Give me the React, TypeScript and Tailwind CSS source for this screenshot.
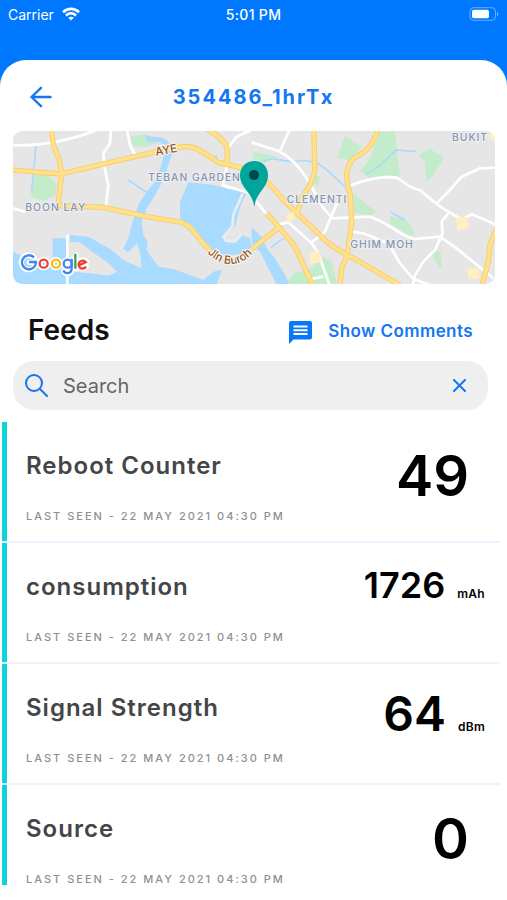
import React from "react";

type Feed = {
  name: string;
  value: string;
  unit?: string;
  size: string;
};

const feeds: Feed[] = [
  { name: "Reboot Counter", value: "49", size: "text-[56px]" },
  { name: "consumption", value: "1726", unit: "mAh", size: "text-[36px]" },
  { name: "Signal Strength", value: "64", unit: "dBm", size: "text-[48px]" },
  { name: "Source", value: "0", size: "text-[56px]" },
];

const lastSeen = "LAST SEEN - 22 MAY 2021 04:30 PM";

function StatusBar() {
  return (
    <div className="grid h-7 grid-cols-3 items-center px-2 text-[14px] text-white">
      <div className="flex items-center gap-2">
        <span>Carrier</span>
        <svg width="18" height="14" viewBox="0 0 18 14" aria-hidden="true">
          <g fill="none" stroke="white" strokeWidth="2.6">
            <path d="M1 5.2C5.6.7 12.4.7 17 5.2" />
            <path d="M4 8.5c3-2.8 7-2.8 10 0" />
          </g>
          <path d="M6.2 10.8c1.700-1.500 3.900-1.500 5.600 0L9 13.600z" fill="white" />
        </svg>
      </div>
      <span className="text-center font-medium tracking-wide">5:01 PM</span>
      <svg className="justify-self-end" width="30" height="14" viewBox="0 0 30 14" aria-hidden="true">
        <rect x="1" y=".7" width="25.5" height="12.6" rx="3.5" fill="none" stroke="white" strokeOpacity=".4" />
        <rect x="3" y="2.7" width="17" height="8.6" rx="2" fill="white" />
        <path d="M28 4.800c1.800.8 1.800 3.600 0 4.400z" fill="white" fillOpacity=".5" />
      </svg>
    </div>
  );
}

const majorRoads = [
  "M20 134L182 147L330 112L500 73C550 62 575 62 600 76L655 112L730 130C790 150 815 185 850 225L980 350C1010 375 1045 392 1070 405L1200 480",
  "M154 10L160 60L178 105L185 147L175 235",
  "M175 242L310 247L440 275L545 292C575 305 585 325 600 345L650 398",
  "M615 10C655 30 680 50 683 80L680 120",
  "M755 372L840 305",
  "M800 265L840 310L885 365L940 485",
  "M942 10L944 140L930 180L905 220L890 270",
  "M1135 10C1120 60 1100 80 1060 100C1035 130 1036 160 1050 205L1055 290L1042 390L1025 430L1020 485",
  "M1490 310L1470 360L1465 410L1445 485",
];

const minorRoads = [
  "M30 60C120 65 200 50 290 15",
  "M333 10L330 55L310 85L313 125L325 180L318 242",
  "M380 10L390 60L408 95",
  "M680 125L668 180L750 205M668 180L690 190",
  "M680 75L710 35L765 10",
  "M755 52L835 78C870 95 895 120 920 160C955 215 960 250 1000 280L1110 275C1180 300 1200 335 1245 342L1320 335L1370 370L1480 460",
  "M840 78L855 45L870 10",
  "M1050 182C1130 150 1170 155 1190 158C1220 175 1230 192 1260 195C1295 225 1310 240 1345 260L1385 283L1415 268L1490 300",
  "M1310 235L1350 195L1385 155L1440 130L1490 128",
  "M1345 265L1325 290L1328 325L1305 375L1270 410L1245 450L1238 485",
  "M1055 320L1090 325L1165 355L1200 415L1240 462L1290 480",
  "M1010 235L975 320L935 352",
  "M835 298L865 292L935 355L955 385L990 485",
  "M935 462L970 455",
  "M768 228L800 268",
  "M30 248L75 260M202 330V485",
];

const districts = [
  { name: "BOON LAY", x: 76, y: 258 },
  { name: "TEBAN GARDEN", x: 445, y: 167 },
  { name: "CLEMENTI", x: 860, y: 233 },
  { name: "GHIM MOH", x: 1051, y: 368 },
  { name: "BUKIT", x: 1356, y: 47 },
];

function LocationMap() {
  return (
    <svg
      className="block w-full"
      viewBox="39 18 1446 459"
      role="img"
      aria-label="Map of the device location"
      fontFamily="Inter, sans-serif"
    >
      <defs>
        <path id="buroh" d="M622 384C660 420 710 435 756 386C770 372 780 360 790 350" />
        <clipPath id="frame">
          <rect x="39" y="18" width="1446" height="459" rx="28" />
        </clipPath>
      </defs>
      <g clipPath="url(#frame)">
        <path fill="#e6e6e6" d="M39 18H1485V477H39z" />
        <path
          fill="#c3eccb"
          d="M98 150H140L172 178L165 212L130 228L92 215zM392 35L430 28L490 45L440 66L400 62zM1035 32L1085 65L1050 105L1010 100zM1140 20H1185L1200 155L1160 150L1110 160L1080 140L1110 100zM1255 90L1290 72L1333 98L1300 150L1280 170L1275 110zM1060 205L1128 260L1110 272L1062 262zM1170 272L1225 290L1245 328L1225 330L1170 295zM1295 378L1322 378L1325 435L1300 400zM759 80L835 95L790 115L759 100zM940 150L960 155L955 182L938 175zM970 395L995 410L1010 477H860L880 445L935 430z"
        />
        <g fill="#a9daff">
          <path d="M565 172L640 180L740 205L722 240L705 305L670 335L675 345L700 350L725 330L750 340L755 365L735 388L680 390L650 385L600 335L575 300L540 280L540 230z" />
          <path d="M435 30C465 42 485 30 505 50L517 85L505 120L490 165L460 220L440 250L425 290L430 330L443 350L440 375L460 405L475 425L520 432L610 465L640 440L665 435L650 480H39V380L80 400L158 415V340H198V440H220L330 450L350 440L320 410L275 380L240 355L210 352V330L265 335L330 372L370 405L425 430L420 380L410 355L385 382L370 372L385 340L398 290L415 240L440 200L470 165L485 115L500 60L470 50L440 48z" />
          <path d="M755 308L785 335L800 370L825 400L850 440L870 480H830L800 420L780 380L755 355z" />
        </g>
        <g fill="none" stroke="#a9daff" strokeWidth="5">
          <path d="M108 60L95 200M385 165L440 202M500 130L470 190M648 90V115" />
          <path d="M790 110C820 90 850 115 890 108C960 100 980 135 1035 185M1100 145C1150 125 1160 95 1190 75L1250 80M812 368L850 340M1170 260L1215 285" />
        </g>
        <path fill="#e8e6e2" d="M210 352H240L275 380L330 420L350 440L325 452L210 435z" />
        <g fill="none" stroke="white" strokeWidth="8" strokeLinejoin="round">
          {minorRoads.map((d) => (
            <path key={d} d={d} />
          ))}
        </g>
        <path d="M728 205L700 270L697 305L670 335L678 347L705 350L725 328" fill="none" stroke="#ececec" strokeWidth="8" />
        <g fill="none" stroke="#f5cc6c" strokeWidth="16" strokeLinejoin="round">
          {majorRoads.map((d) => (
            <path key={d} d={d} />
          ))}
        </g>
        <g fill="none" stroke="#ffe18b" strokeWidth="11" strokeLinejoin="round">
          {majorRoads.map((d) => (
            <path key={d} d={d} />
          ))}
        </g>
        <g fill="#ffefc1">
          <path d="M1368 278L1400 275L1408 308L1372 318zM928 382L958 378L965 412L930 416zM1402 430L1435 430L1440 460L1405 462zM860 268L880 262L886 282L862 292zM1462 30L1485 28V52z" />
        </g>

        <g fontSize="31" fontWeight="500" fill="#8694b3" stroke="#f0f0f0" strokeWidth="6" paintOrder="stroke" strokeLinejoin="round" letterSpacing="3">
          {districts.map((d) => (
            <text key={d.name} x={d.x} y={d.y}>
              {d.name}
            </text>
          ))}
        </g>
        <g fontSize="34" fontWeight="500" fill="#8a5a32" stroke="#fbf3e6" strokeWidth="7" paintOrder="stroke" strokeLinejoin="round">
          <text x="468" y="92" transform="rotate(-10 468 92)">AYE</text>
          <text>
            <textPath href="#buroh">Jln Buroh</textPath>
          </text>
        </g>

        <path d="M763 245C757 200 720 190 720 150C720 126 739 108 763 108S804 126 804 150C804 190 769 200 763 245z" fill="#00a59b" />
        <circle cx="762" cy="150" r="15" fill="#00474b" />

        <g fill="none" stroke="white" strokeWidth="16" strokeLinecap="round">
          <path d="M103 398A22 22 0 1 0 108 412H88" />
          <circle cx="131" cy="416" r="12" />
          <circle cx="168" cy="416" r="12" />
          <circle cx="203" cy="416" r="12" />
          <path d="M216 404V434A13 13 0 0 1 191 437M228 390V430M238 418L258 409A12 12 0 1 0 259 424" />
        </g>
        <g fill="none" strokeWidth="7">
          <path d="M102 397A21 21 0 1 0 108 411H87" stroke="#4285f4" />
          <circle cx="131" cy="416" r="12" stroke="#ea4335" />
          <circle cx="168" cy="416" r="12" stroke="#fbbc05" />
          <circle cx="203" cy="416" r="12" stroke="#4285f4" />
          <path d="M215 401V430C215 448 195 448 190 436" stroke="#4285f4" />
          <path d="M226 386V431" stroke="#34a853" />
          <path d="M237 421L257 411A12 12 0 1 0 258 425" stroke="#ea4335" />
        </g>
      </g>
    </svg>
  );
}

function FeedRow({ feed }: { feed: Feed }) {
  return (
    <li className="flex h-[121px] border-b-2 border-[#f0f3ff] last:h-[115px] last:border-b-0">
      <span className="w-[5px] shrink-0 bg-[#0fd3d6] in-[li:last-child]:mb-[15px]" />
      <div className="flex grow items-start justify-between pr-[15px] pl-[19px]">
        <div className="pt-7">
          <h3 className="text-[24px] leading-8 font-semibold tracking-[1px] text-[#434649]">{feed.name}</h3>
          <p className="mt-[26px] text-[11px] leading-4 font-medium tracking-[2px] text-[#8e9094]">{lastSeen}</p>
        </div>
        <div className={feed.unit ? "flex items-baseline gap-3 pt-5" : "flex items-baseline pt-5 pr-4"}>
          <span className={`${feed.size} leading-[normal] font-semibold text-black`}>{feed.value}</span>
          {feed.unit && <span className="text-[12px] font-semibold tracking-wide text-black">{feed.unit}</span>}
        </div>
      </div>
    </li>
  );
}

export default function App() {
  return (
    <div className="min-h-screen bg-[#0077ff] font-['Inter',sans-serif]">
      <StatusBar />
      <main className="mt-8 min-h-[calc(100vh-60px)] rounded-t-[26px] bg-white">
        <header className="grid h-[71px] grid-cols-[56px_1fr_56px] items-center pt-[2px]">
          <button type="button" aria-label="Back" className="flex justify-end pr-1 text-[#1476f2]">
            <svg width="22" height="22" viewBox="0 0 22 22" fill="none" stroke="currentColor" strokeWidth="2.4" strokeLinecap="round" strokeLinejoin="round">
              <path d="M20.5 11H1.500M11 1.800L1.500 11l9.500 9.200" />
            </svg>
          </button>
          <h1 className="text-center text-[20px] font-bold tracking-widest text-[#1476f2]">354486_1hrTx</h1>
        </header>

        <div className="pr-3 pl-[13px]">
          <LocationMap />
        </div>

        <div className="mt-[26px] flex h-10 items-center justify-between pr-[34px] pl-7">
          <h2 className="text-[28px] font-semibold text-[#111111]">Feeds</h2>
          <button type="button" className="flex items-center gap-4 pt-1 text-[17px] font-semibold tracking-wide text-[#1476f2]">
            <svg width="23" height="23" viewBox="0 0 23 23" aria-hidden="true">
              <path d="M2 0h19a2 2 0 0 1 2 2v14.500a2 2 0 0 1-2 2H4.500L0 23V2a2 2 0 0 1 2-2z" fill="#0877fa" />
              <path d="M4.500 5.500h14M4.500 9.300h14M4.500 13.100h14" stroke="white" strokeWidth="2" />
            </svg>
            Show Comments
          </button>
        </div>

        <div className="mt-[11px] mr-[19px] ml-[13px] flex h-[49px] items-center rounded-[21px] bg-[#efefef] px-3 text-[#1476f2]">
          <svg width="23" height="23" viewBox="0 0 23 23" fill="none" stroke="currentColor" strokeWidth="2" strokeLinecap="round" aria-hidden="true">
            <circle cx="9" cy="9" r="8" />
            <path d="M15 15l7 7" />
          </svg>
          <input
            type="text"
            aria-label="Search feeds"
            placeholder="Search"
            className="ml-[15px] min-w-0 grow bg-transparent text-[20px] text-[#333333] outline-none placeholder:text-[#666666]"
          />
          <button type="button" aria-label="Clear search" className="mr-[10px]">
            <svg width="13" height="13" viewBox="0 0 13 13" stroke="currentColor" strokeWidth="2" strokeLinecap="round">
              <path d="M1 1l11 11M12 1L1 12" />
            </svg>
          </button>
        </div>

        <ul className="mt-3 mr-[7px] ml-[2px]">
          {feeds.map((feed) => (
            <FeedRow key={feed.name} feed={feed} />
          ))}
        </ul>
      </main>
    </div>
  );
}
